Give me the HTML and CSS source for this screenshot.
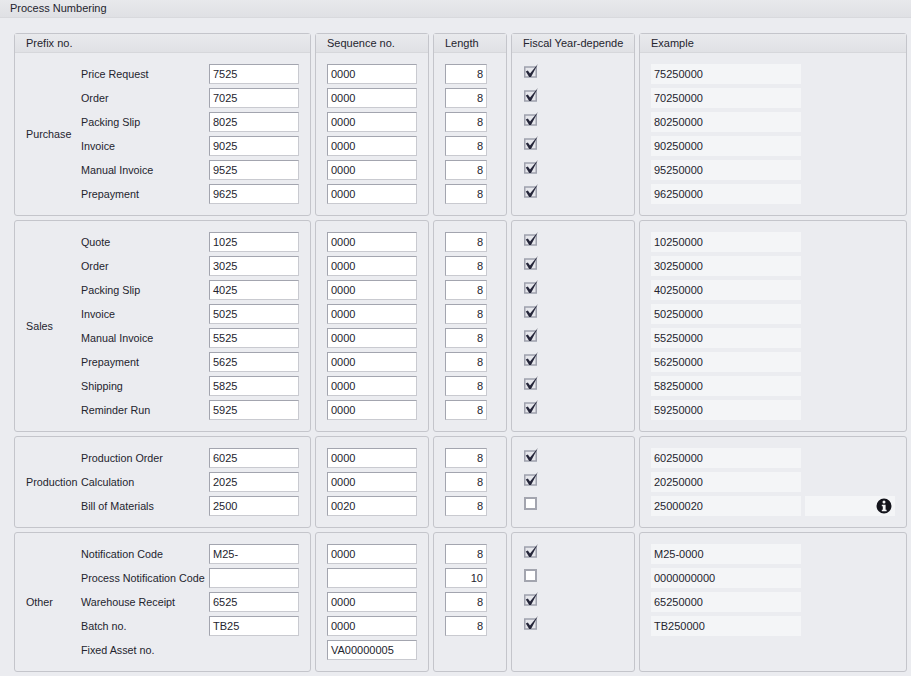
FILE: index.html
```html
<!DOCTYPE html>
<html lang="en">
<head>
    <meta charset="UTF-8">
    <title>Process Numbering</title>
    <link rel="stylesheet" href="styles.css">
</head>
<body>

    <svg class="defs" width="0" height="0">
        <symbol id="tick" viewBox="0 0 14 14">
            <rect x="0.75" y="3" width="11.5" height="10" fill="#e6e7ec" stroke="#9fa1ad" stroke-width="1.5"/>
            <path d="M1.8 7.4 L3.8 6.5 L6 9.4 L13.9 0 L7 13 L5.2 13 Z" fill="#25263a"/>
        </symbol>
        <symbol id="empty" viewBox="0 0 14 14">
            <rect x="1" y="2" width="11" height="11" fill="#fff" stroke="#a3a5af" stroke-width="2"/>
        </symbol>
    </svg>

    <div class="title">Process Numbering</div>

    <div class="sheet">
        <!-- Purchase -->
        <section class="panel prefix">
            <h2>Prefix no.</h2>
            <div class="body">
                <div class="group">Purchase</div>
                <div class="rows">
                    <div class="row"><span class="label">Price Request</span><div class="field">7525</div></div>
                    <div class="row"><span class="label">Order</span><div class="field">7025</div></div>
                    <div class="row"><span class="label">Packing Slip</span><div class="field">8025</div></div>
                    <div class="row"><span class="label">Invoice</span><div class="field">9025</div></div>
                    <div class="row"><span class="label">Manual Invoice</span><div class="field">9525</div></div>
                    <div class="row"><span class="label">Prepayment</span><div class="field">9625</div></div>
                </div>
            </div>
        </section>
        <section class="panel">
            <h2>Sequence no.</h2>
            <div class="rows body">
                <div class="field">0000</div>
                <div class="field">0000</div>
                <div class="field">0000</div>
                <div class="field">0000</div>
                <div class="field">0000</div>
                <div class="field">0000</div>
            </div>
        </section>
        <section class="panel">
            <h2>Length</h2>
            <div class="rows body">
                <div class="field num">8</div>
                <div class="field num">8</div>
                <div class="field num">8</div>
                <div class="field num">8</div>
                <div class="field num">8</div>
                <div class="field num">8</div>
            </div>
        </section>
        <section class="panel">
            <h2>Fiscal Year-depende</h2>
            <div class="rows body">
                <svg class="check"><use href="#tick"/></svg>
                <svg class="check"><use href="#tick"/></svg>
                <svg class="check"><use href="#tick"/></svg>
                <svg class="check"><use href="#tick"/></svg>
                <svg class="check"><use href="#tick"/></svg>
                <svg class="check"><use href="#tick"/></svg>
            </div>
        </section>
        <section class="panel">
            <h2>Example</h2>
            <div class="rows body">
                <div class="row"><div class="sample">75250000</div></div>
                <div class="row"><div class="sample">70250000</div></div>
                <div class="row"><div class="sample">80250000</div></div>
                <div class="row"><div class="sample">90250000</div></div>
                <div class="row"><div class="sample">95250000</div></div>
                <div class="row"><div class="sample">96250000</div></div>
            </div>
        </section>

        <!-- Sales -->
        <section class="panel prefix">
            <div class="body">
                <div class="group">Sales</div>
                <div class="rows">
                    <div class="row"><span class="label">Quote</span><div class="field">1025</div></div>
                    <div class="row"><span class="label">Order</span><div class="field">3025</div></div>
                    <div class="row"><span class="label">Packing Slip</span><div class="field">4025</div></div>
                    <div class="row"><span class="label">Invoice</span><div class="field">5025</div></div>
                    <div class="row"><span class="label">Manual Invoice</span><div class="field">5525</div></div>
                    <div class="row"><span class="label">Prepayment</span><div class="field">5625</div></div>
                    <div class="row"><span class="label">Shipping</span><div class="field">5825</div></div>
                    <div class="row"><span class="label">Reminder Run</span><div class="field">5925</div></div>
                </div>
            </div>
        </section>
        <section class="panel">
            <div class="rows body">
                <div class="field">0000</div>
                <div class="field">0000</div>
                <div class="field">0000</div>
                <div class="field">0000</div>
                <div class="field">0000</div>
                <div class="field">0000</div>
                <div class="field">0000</div>
                <div class="field">0000</div>
            </div>
        </section>
        <section class="panel">
            <div class="rows body">
                <div class="field num">8</div>
                <div class="field num">8</div>
                <div class="field num">8</div>
                <div class="field num">8</div>
                <div class="field num">8</div>
                <div class="field num">8</div>
                <div class="field num">8</div>
                <div class="field num">8</div>
            </div>
        </section>
        <section class="panel">
            <div class="rows body">
                <svg class="check"><use href="#tick"/></svg>
                <svg class="check"><use href="#tick"/></svg>
                <svg class="check"><use href="#tick"/></svg>
                <svg class="check"><use href="#tick"/></svg>
                <svg class="check"><use href="#tick"/></svg>
                <svg class="check"><use href="#tick"/></svg>
                <svg class="check"><use href="#tick"/></svg>
                <svg class="check"><use href="#tick"/></svg>
            </div>
        </section>
        <section class="panel">
            <div class="rows body">
                <div class="row"><div class="sample">10250000</div></div>
                <div class="row"><div class="sample">30250000</div></div>
                <div class="row"><div class="sample">40250000</div></div>
                <div class="row"><div class="sample">50250000</div></div>
                <div class="row"><div class="sample">55250000</div></div>
                <div class="row"><div class="sample">56250000</div></div>
                <div class="row"><div class="sample">58250000</div></div>
                <div class="row"><div class="sample">59250000</div></div>
            </div>
        </section>

        <!-- Production -->
        <section class="panel prefix">
            <div class="body">
                <div class="group">Production</div>
                <div class="rows">
                    <div class="row"><span class="label">Production Order</span><div class="field">6025</div></div>
                    <div class="row"><span class="label">Calculation</span><div class="field">2025</div></div>
                    <div class="row"><span class="label">Bill of Materials</span><div class="field">2500</div></div>
                </div>
            </div>
        </section>
        <section class="panel">
            <div class="rows body">
                <div class="field">0000</div>
                <div class="field">0000</div>
                <div class="field">0020</div>
            </div>
        </section>
        <section class="panel">
            <div class="rows body">
                <div class="field num">8</div>
                <div class="field num">8</div>
                <div class="field num">8</div>
            </div>
        </section>
        <section class="panel">
            <div class="rows body">
                <svg class="check"><use href="#tick"/></svg>
                <svg class="check"><use href="#tick"/></svg>
                <svg class="check"><use href="#empty"/></svg>
            </div>
        </section>
        <section class="panel">
            <div class="rows body">
                <div class="row"><div class="sample">60250000</div></div>
                <div class="row"><div class="sample">20250000</div></div>
                <div class="row">
                    <div class="sample">25000020</div>
                    <div class="note">
                        <svg class="info" viewBox="0 0 16 16">
                            <path fill-rule="evenodd" d="M8 0.5a7.5 7.5 0 1 0 0 15a7.5 7.5 0 0 0 0-15ZM8 2.6a1.5 1.5 0 1 1 0 3a1.5 1.5 0 0 1 0-3ZM5.8 6.8H9.6V11.8H10.6V13.2H5.8V11.8H6.8V8.2H5.8Z" fill="#14141c"/>
                        </svg>
                    </div>
                </div>
            </div>
        </section>

        <!-- Other -->
        <section class="panel prefix">
            <div class="body">
                <div class="group">Other</div>
                <div class="rows">
                    <div class="row"><span class="label">Notification Code</span><div class="field">M25-</div></div>
                    <div class="row"><span class="label">Process Notification Code</span><div class="field"></div></div>
                    <div class="row"><span class="label">Warehouse Receipt</span><div class="field">6525</div></div>
                    <div class="row"><span class="label">Batch no.</span><div class="field">TB25</div></div>
                    <div class="row"><span class="label">Fixed Asset no.</span></div>
                </div>
            </div>
        </section>
        <section class="panel">
            <div class="rows body">
                <div class="field">0000</div>
                <div class="field"></div>
                <div class="field">0000</div>
                <div class="field">0000</div>
                <div class="field">VA00000005</div>
            </div>
        </section>
        <section class="panel">
            <div class="rows body">
                <div class="field num">8</div>
                <div class="field num">10</div>
                <div class="field num">8</div>
                <div class="field num">8</div>
            </div>
        </section>
        <section class="panel">
            <div class="rows body">
                <svg class="check"><use href="#tick"/></svg>
                <svg class="check"><use href="#empty"/></svg>
                <svg class="check"><use href="#tick"/></svg>
                <svg class="check"><use href="#tick"/></svg>
            </div>
        </section>
        <section class="panel">
            <div class="rows body">
                <div class="row"><div class="sample">M25-0000</div></div>
                <div class="row"><div class="sample">0000000000</div></div>
                <div class="row"><div class="sample">65250000</div></div>
                <div class="row"><div class="sample">TB250000</div></div>
            </div>
        </section>
    </div>

</body>
</html>
```

FILE: styles.css
```css
body {
    margin: 0;
    background-color: #ebecf0;
    color: #24242e;
    font-family: "Liberation Sans", Arial, sans-serif;
    font-size: 11px;
    height: 676px;
    overflow: hidden;
}

.defs {
    position: absolute;
}

.title {
    height: 17px;
    line-height: 17px;
    padding-left: 10px;
    background: linear-gradient(#e8e9ec, #dfe0e4);
    border-bottom: 1px solid #d8d9dd;
}

.sheet {
    display: grid;
    grid-template-columns: 297px 114px 74px 124px 268px;
    gap: 4px;
    padding: 15px 0 0 14px;
}

.panel {
    box-sizing: border-box;
    border: 1px solid #c4c5cb;
    border-radius: 3px;
}

.panel h2 {
    margin: 0;
    height: 18px;
    line-height: 18px;
    padding-left: 11px;
    font-size: 11px;
    font-weight: normal;
    background: linear-gradient(#e9eaed, #e0e1e5);
    border-bottom: 1px solid #d6d7db;
}

.body {
    padding: 11px;
}

.prefix .body {
    display: flex;
    align-items: center;
}

.group {
    width: 55px;
    flex-shrink: 0;
    font-size: 10.75px;
}

.rows {
    display: flex;
    flex-direction: column;
    gap: 4px;
}

.row {
    display: flex;
    gap: 4px;
    height: 20px;
    align-items: center;
}

.label {
    width: 124px;
    font-size: 10.75px;
    white-space: nowrap;
}

.field {
    box-sizing: border-box;
    width: 90px;
    height: 20px;
    line-height: 18px;
    padding: 0 3px;
    background-color: #fff;
    border: 1px solid;
    border-color: #a3a5af #c9cad0 #c9cad0 #a3a5af;
}

.num {
    width: 42px;
    text-align: right;
}

.check {
    display: block;
    width: 14px;
    height: 14px;
    margin: 0 0 6px 1px;
}

.sample {
    box-sizing: border-box;
    width: 150px;
    height: 20px;
    line-height: 20px;
    padding-left: 3px;
    background-color: #f4f5f7;
}

.note {
    display: flex;
    align-items: center;
    justify-content: flex-end;
    width: 90px;
    height: 20px;
    padding-right: 3px;
    box-sizing: border-box;
    background-color: #f4f5f7;
}

.info {
    width: 16px;
    height: 16px;
}
```
